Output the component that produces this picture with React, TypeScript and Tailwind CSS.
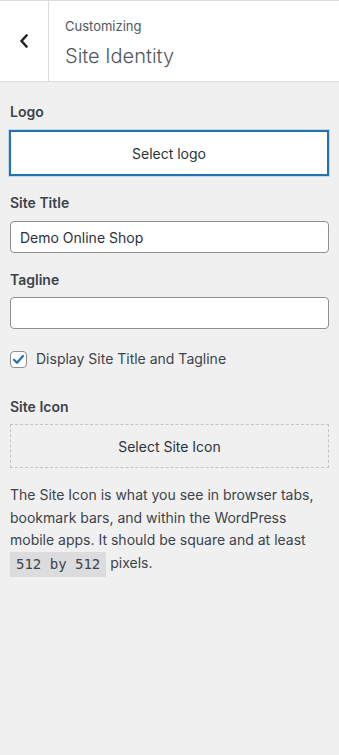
import { useState } from 'react';

export default function App() {
    const [title, setTitle] = useState('Demo Online Shop');
    const [tagline, setTagline] = useState('');
    const [showTitle, setShowTitle] = useState(true);

    return (
        <div className="min-h-[755px] w-[339px] bg-[#f0f0f1] text-[#1d2327] font-['Inter','Noto_Sans',sans-serif]">
            <div className="flex h-[82px] border-t border-b border-[#dcdcde] bg-white">
                <button className="flex w-[49px] shrink-0 items-center justify-center border-r border-[#dcdcde]">
                    <svg width="10" height="14" viewBox="0 0 10 14" fill="none">
                        <path d="M7.5 1.5 L2.5 7 L7.5 12.5" stroke="#1d2327" strokeWidth="2.6" strokeLinecap="round" strokeLinejoin="round" />
                    </svg>
                </button>
                <div className="flex flex-col pl-[16px] pt-[15px]">
                    <span className="text-[13px] leading-[20px] text-[#50575e]">Customizing</span>
                    <span className="mt-[6px] text-[20px] leading-[28px] font-light text-[#50575e]">Site Identity</span>
                </div>
            </div>

            <div className="px-[10px] pt-[20px] text-[14px]">
                <label className="block text-[14px] leading-[20px] font-semibold text-[#3c434a]">Logo</label>
                <button className="mt-[8px] h-[46px] w-[320px] -ml-[1px] border-2 border-[#2271b1] bg-white text-[14px] text-[#2c3338] shadow-[0_0_0_1px_#c5d9ed]">
                    Select logo
                </button>

                <label className="mt-[17px] block text-[14px] leading-[20px] font-semibold text-[#3c434a]">Site Title</label>
                <input
                    type="text"
                    value={title}
                    onChange={(e) => setTitle(e.target.value)}
                    className="mt-[8px] block h-[32px] w-full rounded-[4px] border border-[#8c8f94] bg-white px-[9px] text-[14px] text-[#2c3338] outline-none"
                />

                <label className="mt-[17px] block text-[14px] leading-[20px] font-semibold text-[#3c434a]">Tagline</label>
                <input
                    type="text"
                    value={tagline}
                    onChange={(e) => setTagline(e.target.value)}
                    className="mt-[7px] block h-[32px] w-full rounded-[4px] border border-[#8c8f94] bg-white px-[9px] text-[14px] text-[#2c3338] outline-none"
                />

                <label className="mt-[20px] flex items-center gap-[9px] leading-[20px] text-[#3c434a]" onClick={() => setShowTitle(!showTitle)}>
                    <span className="flex h-[17px] w-[17px] items-center justify-center rounded-[4px] border border-[#8c8f94] bg-white">
                        {showTitle && (
                            <svg width="13" height="13" viewBox="0 0 13 13" fill="none">
                                <path d="M2 6.8 L5 9.8 L11 3" stroke="#2271b1" strokeWidth="2.2" strokeLinecap="round" strokeLinejoin="round" />
                            </svg>
                        )}
                    </span>
                    Display Site Title and Tagline
                </label>

                <label className="mt-[28px] block text-[14px] leading-[20px] font-semibold text-[#3c434a]">Site Icon</label>
                <button className="mt-[7px] h-[44px] w-full border border-dashed border-[#c3c4c7] text-[14px] text-[#2c3338]">
                    Select Site Icon
                </button>

                <p className="mt-[16px] pr-[4px] leading-[22.5px] text-[#3c434a]">
                    The Site Icon is what you see in browser tabs, bookmark bars, and within the WordPress mobile apps. It should be square and at least{' '}
                    <code className="inline-block h-[25px] bg-[#dcdcde] px-[6px] align-middle font-['DejaVu_Sans_Mono',monospace] text-[14px] leading-[25px] text-[#3c434a]">512 by 512</code> pixels.
                </p>
            </div>
        </div>
    );
}
